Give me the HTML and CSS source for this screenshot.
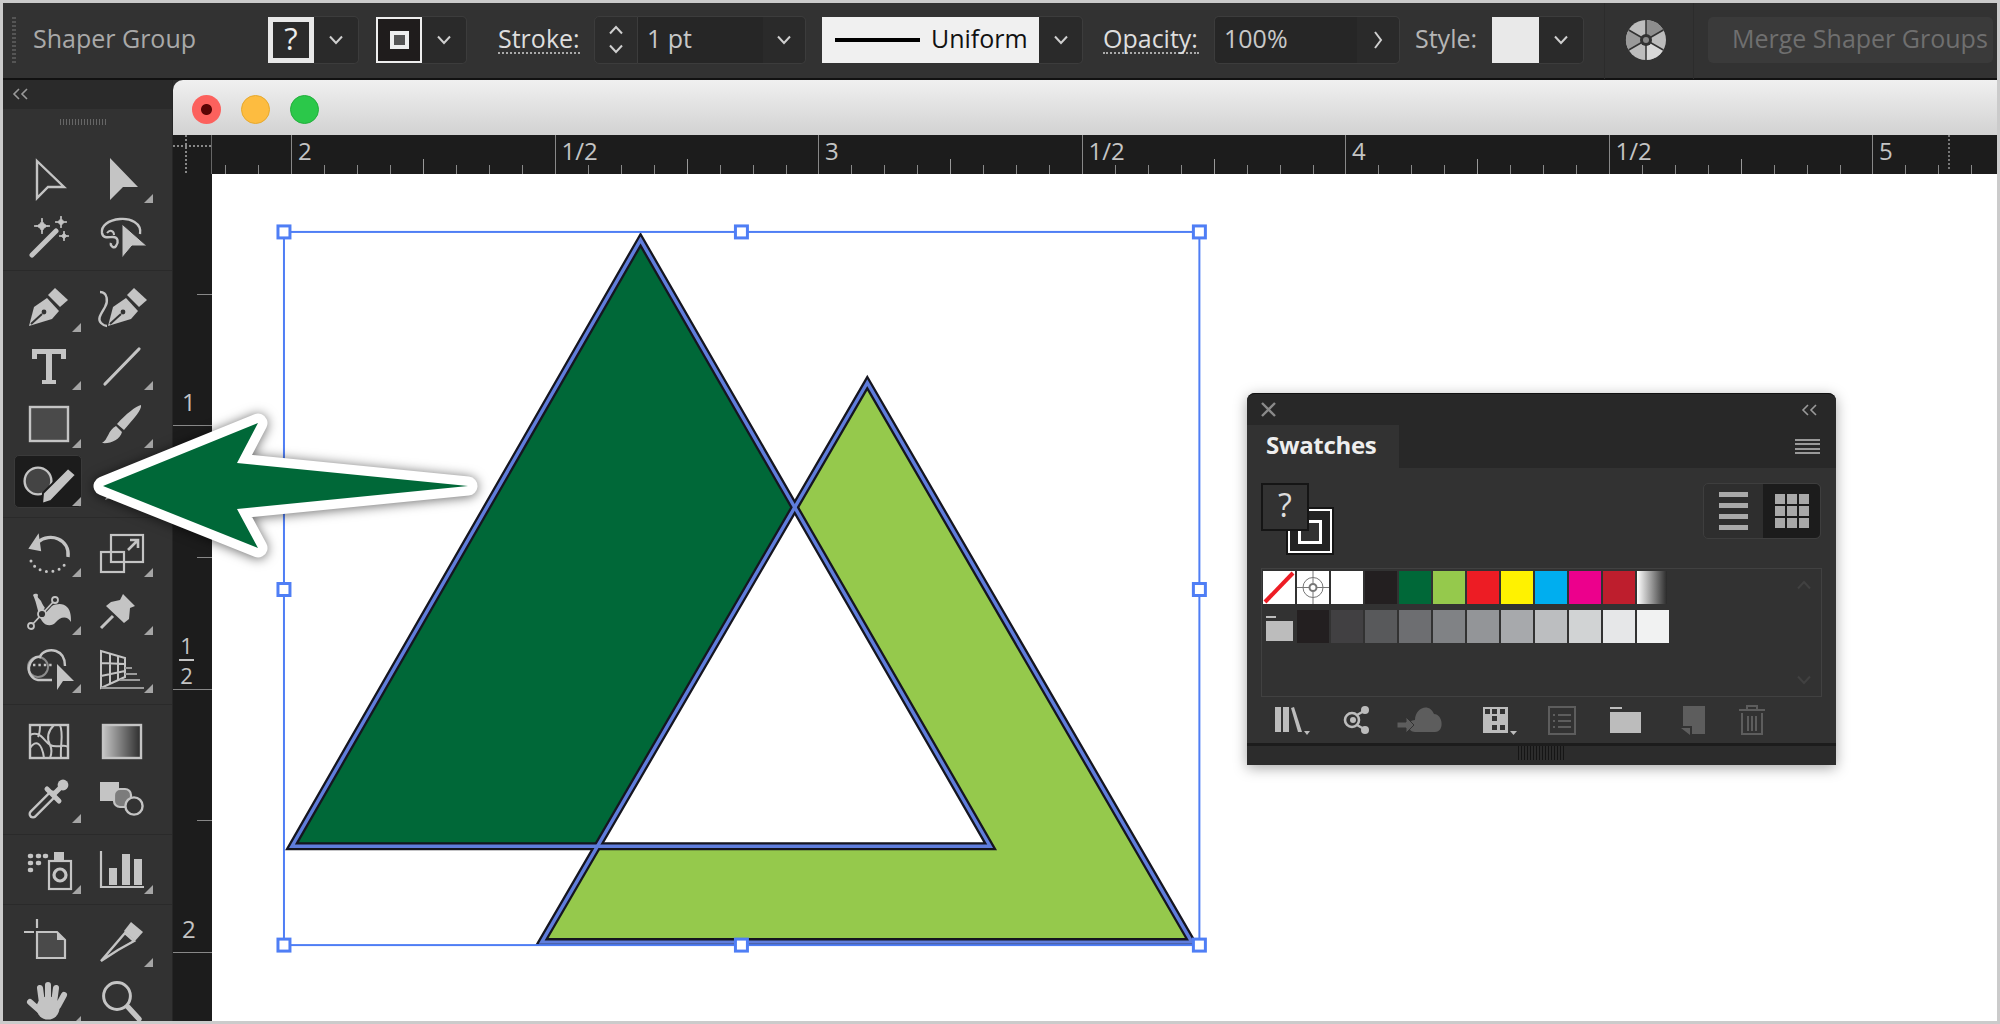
FILE: index.html
```html
<!DOCTYPE html>
<html>
<head>
	<meta charset="utf-8" />
	<title>Shaper Group</title>
	<link rel="stylesheet" href="styles.css">
</head>
<body>
<svg class="defs" width="0" height="0">
	<symbol id="chev-down" viewBox="0 0 16 10"><path d="M2 1.5 L8 8 L14 1.5" fill="none" stroke="currentColor" stroke-width="2"/></symbol>
	<symbol id="chev-up" viewBox="0 0 16 10"><path d="M2 8.5 L8 2 L14 8.5" fill="none" stroke="currentColor" stroke-width="2"/></symbol>
	<symbol id="collapse" viewBox="0 0 18 12"><path d="M7 1 L2 6 L7 11 M15 1 L10 6 L15 11" fill="none" stroke="currentColor" stroke-width="1.6"/></symbol>
	<linearGradient id="grad-tool" x1="0" x2="1" y1="0" y2="0"><stop offset="0" stop-color="#c4c4c4"/><stop offset="1" stop-color="#2c2c2c"/></linearGradient>
</svg>

<div class="frame">
	<!-- top options bar -->
	<div class="optbar">
		<span class="grip"></span>
		<span class="shaper-name">Shaper Group</span>
		<span class="swatch-fill">?</span>
		<span class="dd"><svg class="chev"><use href="#chev-down"/></svg></span>
		<span class="swatch-stroke"><i></i></span>
		<span class="dd"><svg class="chev"><use href="#chev-down"/></svg></span>
		<span class="opt-label stroke-label">Stroke:</span>
		<span class="stepper"><svg class="chev"><use href="#chev-up"/></svg><svg class="chev"><use href="#chev-down"/></svg></span>
		<span class="field field-stroke">1 pt</span>
		<span class="dd dd-narrow"><svg class="chev"><use href="#chev-down"/></svg></span>
		<span class="profile"><i></i>Uniform</span>
		<span class="dd dd-44"><svg class="chev"><use href="#chev-down"/></svg></span>
		<span class="opt-label opacity-label">Opacity:</span>
		<span class="field field-opacity">100%</span>
		<span class="dd dd-narrow"><svg class="chev-right" viewBox="0 0 10 20"><path d="M2 2 L8 10 L2 18" fill="none" stroke="currentColor" stroke-width="2"/></svg></span>
		<span class="style-label">Style:</span>
		<span class="swatch-style"></span>
		<span class="dd"><svg class="chev"><use href="#chev-down"/></svg></span>
		<span class="wheel-box">
			<svg width="42" height="42" viewBox="-21 -21 42 42">
				<circle r="20" fill="#bdbdbd"/>
				<path d="M0 0 L0 -20 A20 20 0 0 1 17.3 -10Z" fill="#8d8d8d"/>
				<path d="M0 0 L17.3 10 A20 20 0 0 1 0 20Z" fill="#d8d8d8"/>
				<path d="M0 0 L-17.3 10 A20 20 0 0 1 -17.3 -10Z" fill="#9a9a9a"/>
				<path d="M0 -20 V20 M-17.3 -10 L17.3 10 M-17.3 10 L17.3 -10" stroke="#323232" stroke-width="1.5"/>
				<circle r="6" fill="#323232"/>
				<circle r="3" fill="#888"/>
			</svg>
		</span>
		<span class="merge-btn">Merge Shaper Groups</span>
	</div>

	<div class="workspace">
		<!-- tools panel -->
		<div class="tools">
			<div class="tools-head"><svg class="collapse-ico"><use href="#collapse"/></svg></div>
			<div class="tools-grip"></div>

			<div class="tool-group g1">
				<div class="tool"><svg class="ico" viewBox="0 0 44 44"><path d="M9 4 L36 30 H20 L9 41Z" fill="none" stroke="currentColor" stroke-width="2.4"/></svg></div>
				<div class="tool sub"><svg class="ico" viewBox="0 0 44 44"><path d="M10 1 L38 30 H23 L10 43Z" fill="currentColor"/></svg></div>
				<div class="tool"><svg class="ico" viewBox="0 0 44 44"><path d="M4 40 L28 16" stroke="currentColor" stroke-width="5" stroke-linecap="round"/><path d="M14 3 Q14 11 22 11 Q14 11 14 19 Q14 11 6 11 Q14 11 14 3Z M33 1 Q33 7 39 7 Q33 7 33 13 Q33 7 27 7 Q33 7 33 1Z M36 16 Q36 21 41 21 Q36 21 36 26 Q36 21 31 21 Q36 21 36 16Z" fill="currentColor" stroke="currentColor"/></svg></div>
				<div class="tool"><svg class="ico" viewBox="0 0 44 44"><path d="M40 19 C42 8 30 3 20 4 C8 5 1 11 2 18 C3 24 9 22 13 22 C18 22 19 27 16 31 C14 34 10 31 11 28" fill="none" stroke="currentColor" stroke-width="2.4"/><path d="M7 18 C10 14 14 16 14 20" fill="none" stroke="currentColor" stroke-width="2"/><path d="M22 9 L47 31 H32 L22 43Z" fill="currentColor" stroke="#323232"/></svg></div>
			</div>

			<div class="tool-group g2">
				<div class="tool sub"><svg class="ico" viewBox="0 0 44 44"><path d="M1 40 L6 21 L19 12 L31 25 L24 33Z" fill="currentColor"/><path d="M27 2 L40 14 L32 21 L20 9Z" fill="currentColor"/><path d="M3 38 L14 28" stroke="#323232" stroke-width="2"/><circle cx="16" cy="26" r="2.4" fill="#323232"/></svg></div>
				<div class="tool"><svg class="ico" viewBox="0 0 44 44"><path d="M8 40 L13 21 L26 12 L38 25 L31 33Z" fill="currentColor"/><path d="M34 2 L47 14 L39 21 L27 9Z" fill="currentColor"/><path d="M10 38 L21 28" stroke="#323232" stroke-width="2"/><circle cx="23" cy="26" r="2.4" fill="#323232"/><path d="M0 6 C8 6 8 16 5 21 C1 28 -3 33 1 37 C3 39 5 40 7 40" fill="none" stroke="currentColor" stroke-width="2.4"/></svg></div>
				<div class="tool sub"><svg class="ico" viewBox="0 0 44 44"><path d="M4 5 H38 V15 H33 V10 H24 V36 H28 V40 H14 V36 H18 V10 H9 V15 H4Z" fill="currentColor"/></svg></div>
				<div class="tool sub"><svg class="ico" viewBox="0 0 44 44"><path d="M5 40 L39 5" stroke="currentColor" stroke-width="3.2" stroke-linecap="round"/></svg></div>
				<div class="tool sub"><svg class="ico" viewBox="0 0 44 44"><rect x="2" y="5" width="38" height="34" fill="#4a4a4a" stroke="currentColor" stroke-width="2.4"/></svg></div>
				<div class="tool sub"><svg class="ico" viewBox="0 0 44 44"><path d="M41 3 C42 8 34 16 24 28 L17 22 C26 12 36 4 41 3Z M16 24 L22 30 C20 38 10 42 2 41 C8 38 8 28 16 24Z" fill="currentColor"/></svg></div>
				<div class="tool sub active"><svg class="ico" viewBox="0 0 44 44"><circle cx="10" cy="21" r="13.4" fill="#444" stroke="currentColor" stroke-width="2.4"/><path d="M14 44 L15 33 L40 8 L48 15 L23 41Z" fill="currentColor" stroke="#1c1c1c" stroke-width="2"/></svg></div>
				<div class="tool sub"><svg class="ico" viewBox="0 0 44 44"><path d="M5 40 L11 28 L33 6 L40 13 L18 35Z" fill="currentColor"/></svg></div>
			</div>

			<div class="tool-group g3">
				<div class="tool sub"><svg class="ico" viewBox="0 0 44 44"><path d="M2 17 L10 5 L12 19Z" fill="currentColor" stroke="currentColor" stroke-width="2"/><path d="M10 11 C22 1 42 8 40 26" fill="none" stroke="currentColor" stroke-width="3.4"/><path d="M3 30 C8 43 30 44 37 33" fill="none" stroke="currentColor" stroke-width="3" stroke-linecap="round" stroke-dasharray="0 6.5"/></svg></div>
				<div class="tool sub"><svg class="ico" viewBox="0 0 44 44"><rect x="11" y="4" width="32" height="27" fill="none" stroke="currentColor" stroke-width="2.2"/><rect x="1" y="21" width="23" height="20" fill="none" stroke="currentColor" stroke-width="2.2"/><path d="M28 19 L37 10 M30 9 H38 V17" fill="none" stroke="currentColor" stroke-width="2.6"/></svg></div>
				<div class="tool sub"><svg class="ico" viewBox="0 0 44 44"><path d="M5 6 C6 5 9 4 10 6 C9 9 11 9 13 12 C14 15 16 17 18 21 C22 16 34 12 39 18 C43 22 43 28 43 33 C39 26 32 28 28 33 C24 38 17 37 14 32 C10 26 9 14 5 6Z" fill="currentColor"/><path d="M3 37 L25 13" stroke="#323232" stroke-width="4"/><path d="M3 37 L27 11" stroke="currentColor" stroke-width="1.8"/><circle cx="3" cy="37" r="3" fill="#323232" stroke="currentColor" stroke-width="1.8"/><circle cx="27" cy="11" r="3" fill="#323232" stroke="currentColor" stroke-width="1.8"/><circle cx="14" cy="25" r="4" fill="#323232" stroke="currentColor" stroke-width="1.8"/></svg></div>
				<div class="tool sub"><svg class="ico" viewBox="0 0 44 44"><path d="M23 5 L35 17 L30 19 L29 30 L24 34 L6 17 L11 13 L20 11Z" fill="currentColor"/><path d="M13 27 L1 39" stroke="currentColor" stroke-width="3"/></svg></div>
				<div class="tool sub"><svg class="ico" viewBox="0 0 44 44"><circle cx="10" cy="20" r="10" fill="none" stroke="#8c8c8c" stroke-width="2"/><path d="M24 33 H10 C4 32 0 26 1 20 C2 13 8 9 12 10 C14 4 22 2 28 4 C34 6 37 12 37 19" fill="none" stroke="currentColor" stroke-width="2.4"/><path d="M5 18 H25" stroke="currentColor" stroke-width="2.4" stroke-dasharray="2.4 3"/><path d="M29 17 L46 34 H35 L29 43Z" fill="currentColor"/></svg></div>
				<div class="tool sub"><svg class="ico" viewBox="0 0 44 44"><path d="M1 4 L25 11 V30 L1 41Z M1 16 L25 17 M1 29 L25 24 M10 6 V37 M18 9 V33" fill="none" stroke="currentColor" stroke-width="2"/><path d="M25 21 H32 M25 27 H37 M20 33 H40 M1 41 H44" stroke="#9b9b9b" stroke-width="2"/></svg></div>
			</div>

			<div class="tool-group g4">
				<div class="tool"><svg class="ico" viewBox="0 0 44 44"><rect x="2" y="6" width="38" height="33" fill="none" stroke="currentColor" stroke-width="2.4"/><path d="M2 16 C12 11 16 22 22 26 C30 30 36 24 40 28 M2 29 C8 20 14 24 16 39 M26 6 C18 14 20 22 22 26 C24 30 24 34 22 39 M12 6 C12 12 12 14 10 18 M32 6 C36 16 32 24 33 39" fill="none" stroke="currentColor" stroke-width="2"/></svg></div>
				<div class="tool"><svg class="ico" viewBox="0 0 44 44"><rect x="3" y="6" width="38" height="33" fill="url(#grad-tool)" stroke="currentColor" stroke-width="2.4"/></svg></div>
				<div class="tool sub"><svg class="ico" viewBox="0 0 44 44"><path d="M5 37 L24 18" stroke="currentColor" stroke-width="9" stroke-linecap="round"/><path d="M5 37 L24 18" stroke="#323232" stroke-width="4.4" stroke-linecap="round"/><path d="M19 12 L31 24 M25 18 L36 7" stroke="currentColor" stroke-width="5" stroke-linecap="round"/><circle cx="35" cy="8" r="5.4" fill="currentColor"/></svg></div>
				<div class="tool"><svg class="ico" viewBox="0 0 44 44"><rect x="0" y="5" width="19" height="19" fill="currentColor"/><rect x="14" y="12" width="17" height="18" rx="6" fill="#7c7c7c" stroke="currentColor" stroke-width="2.2"/><circle cx="34" cy="29" r="8.6" fill="#323232" stroke="currentColor" stroke-width="2.4"/></svg></div>
			</div>

			<div class="tool-group g5">
				<div class="tool sub"><svg class="ico" viewBox="0 0 44 44"><path d="M2 8 H3 M10 8 H11 M17 8 H18 M2 15 H3 M10 15 H11 M2 22 H3" stroke="currentColor" stroke-width="4.6" stroke-linecap="round"/><rect x="21" y="13" width="22" height="28" fill="none" stroke="currentColor" stroke-width="2.2"/><rect x="26" y="4" width="10" height="9" fill="currentColor"/><circle cx="32" cy="27" r="6" fill="none" stroke="currentColor" stroke-width="3.2"/></svg></div>
				<div class="tool sub"><svg class="ico" viewBox="0 0 44 44"><path d="M1 3 V39 H44" fill="none" stroke="currentColor" stroke-width="2.2"/><rect x="9" y="20" width="8" height="17" fill="currentColor"/><rect x="22" y="6" width="8" height="31" fill="currentColor"/><rect x="34" y="11" width="8" height="26" fill="currentColor"/></svg></div>
			</div>

			<div class="tool-group g6">
				<div class="tool"><svg class="ico" viewBox="0 0 44 44"><path d="M9 -2 V7 M-4 11 H6" stroke="currentColor" stroke-width="2.2"/><path d="M9 11 H29 L37 19 V37 H9Z" fill="#4a4a4a" stroke="currentColor" stroke-width="2.2"/><path d="M29 11 V19 H37Z" fill="currentColor"/></svg></div>
				<div class="tool sub"><svg class="ico" viewBox="0 0 44 44"><path d="M1 40 L25 12 L34 20 L18 29Z" fill="none" stroke="currentColor" stroke-width="2.4"/><path d="M31 1 L43 11 L35 20 L24 10Z" fill="currentColor"/></svg></div>
				<div class="tool sub"><svg class="ico" viewBox="0 0 44 44"><path d="M20 6 V24 M12 9 L14 24 M28 9 L26 24 M36 16 L30 27 M2 23 L11 31" stroke="currentColor" stroke-width="6" stroke-linecap="round"/><circle cx="20" cy="29" r="11.5" fill="currentColor"/></svg></div>
				<div class="tool"><svg class="ico" viewBox="0 0 44 44"><circle cx="17" cy="17" r="13.4" fill="none" stroke="currentColor" stroke-width="3"/><path d="M28 28 L39 40" stroke="currentColor" stroke-width="5.4" stroke-linecap="round"/></svg></div>
			</div>
		</div>

		<!-- document window -->
		<div class="doc">
			<div class="doc-title">
				<span class="light light-red"></span>
				<span class="light light-yellow"></span>
				<span class="light light-green"></span>
			</div>
			<div class="hruler">
				<div class="ruler-corner"></div>
				<div class="ruler-track">
					<div class="ruler-lead"></div>
					<div class="ruler-cell">2</div>
					<div class="ruler-cell">1/2</div>
					<div class="ruler-cell">3</div>
					<div class="ruler-cell">1/2</div>
					<div class="ruler-cell">4</div>
					<div class="ruler-cell">1/2</div>
					<div class="ruler-cell ruler-guide">5</div>
				</div>
			</div>
			<div class="doc-main">
				<div class="vruler">
					<div class="vcell vcell-first">1</div>
					<div class="vcell vcell-frac"><span class="frac"><b>1</b><b>2</b></span></div>
					<div class="vcell">2</div>
				</div>
				<div class="canvas">
					<svg class="art" viewBox="212 173 1785 848">
						<polygon points="640,239 291,846 990,846" fill="#006838"/>
						<polygon points="867,382 541,942 1192,942" fill="#95c94c"/>
						<polygon points="794.6,508.4 598,846 990,846" fill="#fff"/>
						<g fill="none" stroke="#15151f" stroke-width="8">
							<polygon points="640,239 291,846 990,846"/>
							<polygon points="867,382 541,942 1192,942"/>
						</g>
						<g fill="none" stroke="#5f7ddc" stroke-width="3.4">
							<polygon points="640,239 291,846 990,846"/>
							<polygon points="867,382 541,942 1192,942"/>
						</g>
						<rect x="283" y="231" width="916.5" height="714" fill="none" stroke="#4f7ef5" stroke-width="2"/>
						<g fill="#fff" stroke="#4f7ef5" stroke-width="3">
							<rect x="277" y="225" width="12" height="12"/>
							<rect x="735" y="225" width="12" height="12"/>
							<rect x="1193.5" y="225" width="12" height="12"/>
							<rect x="277" y="583" width="12" height="12"/>
							<rect x="1193.5" y="583" width="12" height="12"/>
							<rect x="277" y="939" width="12" height="12"/>
							<rect x="735" y="939" width="12" height="12"/>
							<rect x="1193.5" y="939" width="12" height="12"/>
						</g>
					</svg>
				</div>
			</div>
		</div>
	</div>

	<!-- callout arrow over the tools -->
	<svg class="arrow" viewBox="60 380 450 200">
		<polygon points="103,486 258,423 237,463 468,486 237,509 258,548" fill="#006838" stroke="#fff" stroke-width="19" stroke-linejoin="round"/>
		<polygon points="103,486 258,423 237,463 468,486 237,509 258,548" fill="#006838"/>
	</svg>

	<!-- floating swatches panel -->
	<div class="panel">
		<div class="panel-head">
			<svg width="17" height="15" viewBox="0 0 17 15"><path d="M2 1 L15 14 M15 1 L2 14" stroke="#8a8a8a" stroke-width="2.4"/></svg>
			<svg class="collapse-ico"><use href="#collapse"/></svg>
		</div>
		<div class="panel-tabs">
			<span class="panel-tab">Swatches</span>
			<span class="panel-menu"><i></i><i></i><i></i><i></i></span>
		</div>
		<div class="panel-top">
			<div class="fillstroke">
				<span class="fs-stroke"><i></i></span>
				<span class="fs-fill">?</span>
			</div>
			<div class="view-toggle">
				<span class="view-list"><i></i><i></i><i></i><i></i></span>
				<span class="view-grid">
					<svg width="34" height="34" viewBox="0 0 34 34" fill="#a9a9a9"><rect width="10" height="10"/><rect x="12" width="10" height="10"/><rect x="24" width="10" height="10"/><rect y="12" width="10" height="10"/><rect x="12" y="12" width="10" height="10"/><rect x="24" y="12" width="10" height="10"/><rect y="24" width="10" height="10"/><rect x="12" y="24" width="10" height="10"/><rect x="24" y="24" width="10" height="10"/></svg>
				</span>
			</div>
		</div>
		<div class="swatch-list">
			<div class="swatch-row">
				<span class="sw sw-none"><svg width="32" height="33" viewBox="0 0 32 33"><path d="M2 31 L30 2" stroke="#ed1c24" stroke-width="4"/></svg></span>
				<span class="sw sw-reg"><svg width="32" height="33" viewBox="0 0 32 33" fill="none" stroke="#777" stroke-width="1"><circle cx="16" cy="16.5" r="10"/><circle cx="16" cy="16.5" r="3.5" stroke-width="2"/><path d="M16 0 V12 M16 21 V33 M0 16.5 H12 M20 16.5 H32"/></svg></span>
				<span class="sw c-white"></span>
				<span class="sw c-black"></span>
				<span class="sw c-dgreen"></span>
				<span class="sw c-lgreen"></span>
				<span class="sw c-red"></span>
				<span class="sw c-yellow"></span>
				<span class="sw c-cyan"></span>
				<span class="sw c-magenta"></span>
				<span class="sw c-crimson"></span>
				<span class="sw c-grad"></span>
			</div>
			<div class="swatch-row">
				<span class="sw sw-folder"><svg width="32" height="33" viewBox="0 0 32 33"><path d="M3 6 H13 V8 H3Z M3 11 H30 V31 H3Z" fill="#bcbcbc"/></svg></span>
				<span class="sw c-black"></span>
				<span class="sw g1c"></span>
				<span class="sw g2c"></span>
				<span class="sw g3c"></span>
				<span class="sw g4c"></span>
				<span class="sw g5c"></span>
				<span class="sw g6c"></span>
				<span class="sw g7c"></span>
				<span class="sw g8c"></span>
				<span class="sw g9c"></span>
				<span class="sw g10c"></span>
			</div>
			<svg class="chev scroll-up"><use href="#chev-up"/></svg>
			<svg class="chev scroll-down"><use href="#chev-down"/></svg>
		</div>
		<div class="panel-icons">
			<svg class="pico" viewBox="0 0 44 30"><path d="M9 2 H15 V27 H9Z M17 2 H23 V27 H17Z" fill="#bcbcbc"/><path d="M25 3 L28 2 L36 27 H32Z" fill="#bcbcbc"/><path d="M38 26 H44 L41 30Z" fill="#bcbcbc"/></svg>
			<svg class="pico" viewBox="0 0 44 30"><circle cx="19" cy="15" r="7" fill="none" stroke="#bcbcbc" stroke-width="2.6"/><circle cx="20" cy="15" r="3" fill="#bcbcbc"/><circle cx="32" cy="5" r="4" fill="#bcbcbc"/><circle cx="32" cy="25" r="4" fill="#bcbcbc"/><path d="M24 10 L31 6 M24 20 L31 24" stroke="#bcbcbc" stroke-width="2.4"/></svg>
			<svg class="pico" viewBox="0 0 44 30"><path d="M18 27 C10 27 10 15 18 15 C18 3 32 -3 37 9 C46 9 48 27 38 27Z" fill="#5d5d5d"/><path d="M0 17 H9 V12 L17 20 L9 28 V23 H0Z" fill="#5d5d5d" stroke="#323232"/></svg>
			<svg class="pico" viewBox="0 0 44 30"><rect x="10" y="2" width="25" height="26" fill="#bcbcbc"/><path d="M12 4 H17 V9 H12Z M19 4 H24 V9 H19Z M27 4 H32 V9 H27Z M19 11 H24 V16 H19Z M19 20 H24 V25 H19Z M27 20 H32 V25 H27Z" fill="#333"/><path d="M37 26 H44 L40.5 30Z" fill="#bcbcbc"/></svg>
			<svg class="pico" viewBox="0 0 44 30"><rect x="9" y="2" width="26" height="27" fill="none" stroke="#5d5d5d" stroke-width="2"/><path d="M13 10 H15 M18 10 H31 M13 16 H15 M18 16 H31 M13 22 H15 M18 22 H31" stroke="#5d5d5d" stroke-width="2"/></svg>
			<svg class="pico" viewBox="0 0 44 30"><path d="M7 2 H19 V4 H7Z M7 7 H38 V28 H7Z" fill="#bcbcbc"/></svg>
			<svg class="pico" viewBox="0 0 44 30"><path d="M15 1 H37 V29 H24 V21 H15Z M13 23 H22 V30Z" fill="#5d5d5d"/></svg>
			<svg class="pico" viewBox="0 0 44 30"><path d="M9 5 H35 M17 5 V1 H27 V5 M12 8 V29 H32 V8 M18 11 V26 M22 11 V26 M26 11 V26" fill="none" stroke="#5d5d5d" stroke-width="2"/></svg>
		</div>
		<div class="panel-foot"><span class="foot-grip"></span></div>
	</div>
</div>
</body>
</html>
```

FILE: styles.css
```css
* {
	box-sizing: border-box;
}

html, body {
	margin: 0;
	height: 1024px;
	overflow: hidden;
}

body {
	background-color: #cbcbcb;
	padding: 3px;
	font-family: "Open Sans", "Liberation Sans", sans-serif;
}

.defs {
	position: absolute;
}

.frame {
	position: relative;
	height: 1018px;
	overflow: hidden;
	display: flex;
	flex-direction: column;
	background-color: #2e2e2e;
}

/* options bar */
.optbar {
	display: flex;
	align-items: center;
	flex: none;
	height: 77px;
	padding-bottom: 2px;
	background-color: #323232;
	border-bottom: 2px solid #111;
	color: #c8c8c8;
	font-size: 25px;
	white-space: nowrap;
}

.grip {
	width: 4px;
	height: 46px;
	margin-left: 9px;
	border-left: 2px dotted #555;
	border-right: 2px dotted #555;
}

.shaper-name {
	width: 200px;
	margin-left: 17px;
	margin-top: -3px;
	color: #a9a9a9;
}

.swatch-fill {
	width: 46px;
	height: 46px;
	margin-left: 35px;
	border: 5px solid #e8e8e8;
	background-color: #2b2b2b;
	color: #eee;
	font-size: 31px;
	line-height: 33px;
	text-align: center;
}

.dd {
	display: flex;
	align-items: center;
	justify-content: center;
	width: 45px;
	height: 48px;
	background-color: #2a2a2a;
	border: 1px solid #3c3c3c;
	border-left: none;
	border-radius: 0 5px 5px 0;
	color: #cfcfcf;
}

.dd-narrow {
	width: 43px;
}

.dd-44 {
	width: 44px;
}

.chev {
	width: 16px;
	height: 10px;
}

.chev-right {
	width: 10px;
	height: 20px;
}

.swatch-stroke {
	display: flex;
	align-items: center;
	justify-content: center;
	width: 46px;
	height: 46px;
	margin-left: 17px;
	border: 2px solid #eee;
	background-color: #1f1c1c;
}

.swatch-stroke i {
	display: block;
	width: 19px;
	height: 18px;
	border: 4px solid #eee;
	background-color: #555;
}

.opt-label {
	border-bottom: 2px dotted #aaa;
	color: #dedede;
	line-height: 27px;
	margin-top: -1px;
}

.stroke-label {
	width: 82px;
	margin-left: 31px;
}

.stepper {
	display: flex;
	flex-direction: column;
	align-items: center;
	justify-content: center;
	gap: 9px;
	width: 44px;
	height: 48px;
	margin-left: 14px;
	background-color: #2c2c2c;
	border: 1px solid #3c3c3c;
	border-radius: 5px 0 0 5px;
	color: #cfcfcf;
}

.field {
	height: 48px;
	padding-left: 9px;
	background-color: #262626;
	border-top: 1px solid #3c3c3c;
	border-bottom: 1px solid #3c3c3c;
	line-height: 42px;
	color: #c8c8c8;
}

.field-stroke {
	width: 125px;
}

.field-opacity {
	width: 143px;
	margin-left: 15px;
	border-left: 1px solid #3c3c3c;
	border-radius: 5px 0 0 5px;
}

.profile {
	display: flex;
	align-items: center;
	width: 217px;
	height: 46px;
	margin-left: 16px;
	padding-left: 13px;
	padding-bottom: 3px;
	background-color: #f0f0f0;
	color: #111;
}

.profile i {
	display: block;
	width: 85px;
	height: 4px;
	margin: 3px 11px 0 0;
	background-color: #000;
}

.opacity-label {
	width: 96px;
	margin-left: 20px;
}

.style-label {
	width: 62px;
	margin-left: 15px;
	margin-top: -3px;
	color: #b5b5b5;
}

.swatch-style {
	width: 47px;
	height: 46px;
	margin-left: 15px;
	background-color: #e9e9e9;
}

.wheel-box {
	display: flex;
	align-items: center;
	width: 90px;
	height: 79px;
	margin-left: 20px;
	padding-left: 20px;
	border-left: 1px solid #2c2c2c;
	border-right: 1px solid #2c2c2c;
}

.merge-btn {
	width: 285px;
	height: 46px;
	margin-left: 14px;
	padding-left: 24px;
	background-color: #3a3a3a;
	border-radius: 5px;
	color: #6f6f6f;
	line-height: 43px;
}

.workspace {
	display: flex;
	flex: 1;
	min-height: 0;
}

/* tools */
.tools {
	flex: none;
	width: 170px;
	background-color: #323232;
	border-right: 1px solid #262626;
	color: #c4c4c4;
	overflow: hidden;
}

.tools-head {
	height: 29px;
	padding: 8px 0 0 9px;
	background-color: #2a2a2a;
	color: #9a9a9a;
}

.collapse-ico {
	display: block;
	width: 18px;
	height: 12px;
	color: #9a9a9a;
}

.tools-grip {
	width: 47px;
	height: 6px;
	margin: 10px 0 25px 57px;
	background: repeating-linear-gradient(to right, #666 0 1px, transparent 1px 3px);
}

.tool-group {
	display: grid;
	grid-template-columns: 72px 72px;
	grid-auto-rows: 58px;
	padding-left: 11px;
	border-bottom: 1px solid #2a2a2a;
}

.g1 { padding-bottom: 4px; }
.g2 { padding-top: 8px; padding-bottom: 6px; }
.g3 { padding-top: 6px; padding-bottom: 6px; }
.g4 { padding-top: 7px; padding-bottom: 6px; }
.g5 { padding-top: 6px; padding-bottom: 5px; }
.g6 { padding-top: 9px; border-bottom: none; }

.tool {
	position: relative;
	display: flex;
	align-items: center;
	justify-content: center;
}

.ico {
	position: relative;
	width: 44px;
	height: 44px;
	overflow: visible;
}

.sub::after {
	content: "";
	position: absolute;
	right: 5px;
	bottom: 5px;
	border-left: 9px solid transparent;
	border-bottom: 9px solid #a5a5a5;
}

.active::before {
	content: "";
	position: absolute;
	top: 2px;
	left: 0;
	right: 4px;
	bottom: 3px;
	background-color: #1c1c1c;
	border: 1px solid #3a3a3a;
	border-radius: 5px;
}

/* document */
.doc {
	flex: 1;
	min-width: 0;
	display: flex;
	flex-direction: column;
}

.doc-title {
	display: flex;
	align-items: center;
	flex: none;
	gap: 20px;
	height: 55px;
	padding: 4px 0 0 19px;
	background: linear-gradient(#f0f0f0, #d2d2d2);
	border-radius: 10px 0 0 0;
}

.light {
	width: 29px;
	height: 29px;
	border-radius: 50%;
}

.light-red {
	background: radial-gradient(circle, #5a0505 0 5px, #fc615d 6px);
}

.light-yellow {
	background-color: #fdbc40;
	border: 1px solid #e6a92e;
}

.light-green {
	background-color: #2bc84a;
	border: 1px solid #22b03c;
}

.hruler {
	display: flex;
	flex: none;
	height: 39px;
	background-color: #1c1c1c;
	color: #c4c4c4;
	font-size: 24px;
}

.ruler-corner {
	position: relative;
	flex: none;
	width: 39px;
	border-right: 1px solid #666;
}

.ruler-corner::before {
	content: "";
	position: absolute;
	left: 12px;
	top: 0;
	height: 38px;
	border-left: 2px dotted #888;
}

.ruler-corner::after {
	content: "";
	position: absolute;
	left: 0;
	right: 0;
	top: 10px;
	border-top: 2px dotted #888;
}

.ruler-track {
	display: flex;
	flex: 1;
	overflow: hidden;
}

.ruler-lead {
	flex: none;
	width: 79px;
	background:
		repeating-linear-gradient(to left, transparent 0 32px, #888 32px 33px) left bottom / 100% 9px no-repeat;
}

.ruler-cell {
	flex: none;
	width: 263.5px;
	padding-left: 6px;
	border-left: 1px solid #888;
	line-height: 32px;
	background:
		repeating-linear-gradient(to right, transparent 0 131px, #999 131px 132px) left bottom / 100% 15px no-repeat,
		repeating-linear-gradient(to right, transparent 0 32px, #888 32px 32.94px) left bottom / 100% 9px no-repeat;
}

.ruler-guide {
	position: relative;
}

.ruler-guide::after {
	content: "";
	position: absolute;
	left: 75px;
	top: 0;
	height: 34px;
	border-left: 2px dotted #777;
}

.doc-main {
	display: flex;
	flex: 1;
	min-height: 0;
}

.vruler {
	flex: none;
	width: 39px;
	background-color: #1c1c1c;
	color: #c4c4c4;
	font-size: 24px;
}

.vcell {
	display: flex;
	align-items: flex-end;
	height: 263.5px;
	padding: 0 0 8px 9px;
	border-bottom: 1px solid #888;
	line-height: 30px;
	background: linear-gradient(#888, #888) right center / 15px 1px no-repeat;
}

.vcell-first {
	height: 252px;
	background-position: right 120px;
}

.vcell-frac {
	padding-bottom: 0;
}

.frac {
	display: flex;
	flex-direction: column;
	align-items: center;
	width: 15px;
	margin-left: -3px;
	font-size: 22px;
}

.frac b {
	font-weight: normal;
	line-height: 28px;
}

.frac b:first-child {
	width: 100%;
	border-bottom: 2px solid #c4c4c4;
	text-align: center;
}

.canvas {
	flex: 1;
	min-width: 0;
	background-color: #fff;
}

.art {
	display: block;
	width: 100%;
	height: 100%;
}

/* callout */
.arrow {
	position: absolute;
	left: 57px;
	top: 377px;
	width: 450px;
	height: 200px;
	filter: drop-shadow(0 1px 6px rgba(0, 0, 0, 0.6));
}

/* swatches panel */
.panel {
	position: absolute;
	left: 1244px;
	top: 390px;
	width: 589px;
	height: 372px;
	background-color: #323232;
	border-radius: 8px 8px 0 0;
	box-shadow: 0 3px 14px rgba(0, 0, 0, 0.35);
	color: #bcbcbc;
}

.panel-head {
	display: flex;
	align-items: center;
	justify-content: space-between;
	height: 32px;
	padding: 0 17px 0 13px;
	background-color: #282828;
	border-radius: 8px 8px 0 0;
	border-top: 1px solid #111;
}

.panel-tabs {
	display: flex;
	align-items: center;
	justify-content: space-between;
	height: 43px;
	padding-right: 16px;
	background-color: #282828;
}

.panel-tab {
	width: 152px;
	height: 43px;
	padding-left: 19px;
	background-color: #323232;
	color: #eee;
	font-weight: 700;
	font-size: 24px;
	letter-spacing: -0.3px;
	line-height: 40px;
}

.panel-menu {
	display: flex;
	flex-direction: column;
	gap: 2.5px;
	width: 25px;
}

.panel-menu i {
	display: block;
	height: 2px;
	background-color: #999;
}

.panel-top {
	display: flex;
	justify-content: space-between;
	height: 100px;
	padding: 15px 15px 0 14px;
}

.fillstroke {
	position: relative;
	width: 72px;
	height: 71px;
}

.fs-fill {
	position: absolute;
	left: 0;
	top: 0;
	width: 48px;
	height: 48px;
	background-color: #323232;
	border: 2px solid #151515;
	color: #ddd;
	font-size: 32px;
	line-height: 40px;
	text-align: center;
}

.fs-stroke {
	position: absolute;
	right: 0;
	bottom: 0;
	width: 46px;
	height: 46px;
	padding: 9px 8px;
	border: 3px solid #fff;
	outline: 2px solid #151515;
	outline-offset: -1px;
	background-color: #222;
}

.fs-stroke i {
	display: block;
	width: 24px;
	height: 24px;
	border: 3px solid #fff;
	background-color: #323232;
}

.view-toggle {
	display: flex;
	width: 118px;
	height: 56px;
	border: 1px solid #3e3e3e;
	border-radius: 5px;
	background-color: #2e2e2e;
}

.view-list {
	display: flex;
	flex-direction: column;
	justify-content: center;
	gap: 6px;
	width: 59px;
	padding-left: 15px;
}

.view-list i {
	display: block;
	width: 29px;
	height: 5px;
	background-color: #a9a9a9;
}

.view-grid {
	display: flex;
	align-items: center;
	justify-content: center;
	flex: 1;
	background-color: #1c1c1c;
	border-radius: 0 5px 5px 0;
}

.swatch-list {
	position: relative;
	height: 129px;
	margin: 0 14px;
	padding: 2px 1px;
	border: 1px solid #414141;
}

.scroll-up,
.scroll-down {
	position: absolute;
	right: 9px;
	color: #414141;
}

.scroll-up {
	top: 11px;
}

.scroll-down {
	bottom: 11px;
}

.swatch-row {
	display: flex;
	gap: 2px;
	margin-bottom: 6px;
}

.sw {
	display: block;
	flex: none;
	width: 32px;
	height: 33px;
}

.sw-none,
.sw-reg {
	background-color: #fff;
}

.c-white { background-color: #fff; }
.c-black { background-color: #231f20; }
.c-dgreen { background-color: #006838; }
.c-lgreen { background-color: #95c94c; }
.c-red { background-color: #ed1c24; }
.c-yellow { background-color: #fff200; }
.c-cyan { background-color: #00aeef; }
.c-magenta { background-color: #ec008c; }
.c-crimson { background-color: #be1e2d; }
.c-grad { background: linear-gradient(to right, #fff, #2a2a2a); width: 30px; }
.g1c { background-color: #414042; }
.g2c { background-color: #58595b; }
.g3c { background-color: #6d6e71; }
.g4c { background-color: #808285; }
.g5c { background-color: #939598; }
.g6c { background-color: #a7a9ac; }
.g7c { background-color: #bcbec0; }
.g8c { background-color: #d1d3d4; }
.g9c { background-color: #e6e7e8; }
.g10c { background-color: #f1f2f2; }

.panel-icons {
	display: grid;
	grid-template-columns: 67px 64px 76px 67px 63px 65px 62px 62px;
	height: 46px;
	padding: 8px 0 0 19px;
}

.pico {
	width: 44px;
	height: 30px;
	overflow: visible;
}

.panel-foot {
	display: flex;
	justify-content: center;
	height: 22px;
	background-color: #2c2c2c;
	border-top: 3px solid #1c1c1c;
}

.foot-grip {
	width: 47px;
	height: 14px;
	background: repeating-linear-gradient(to right, #151515 0 1px, transparent 1px 3px);
}
```
